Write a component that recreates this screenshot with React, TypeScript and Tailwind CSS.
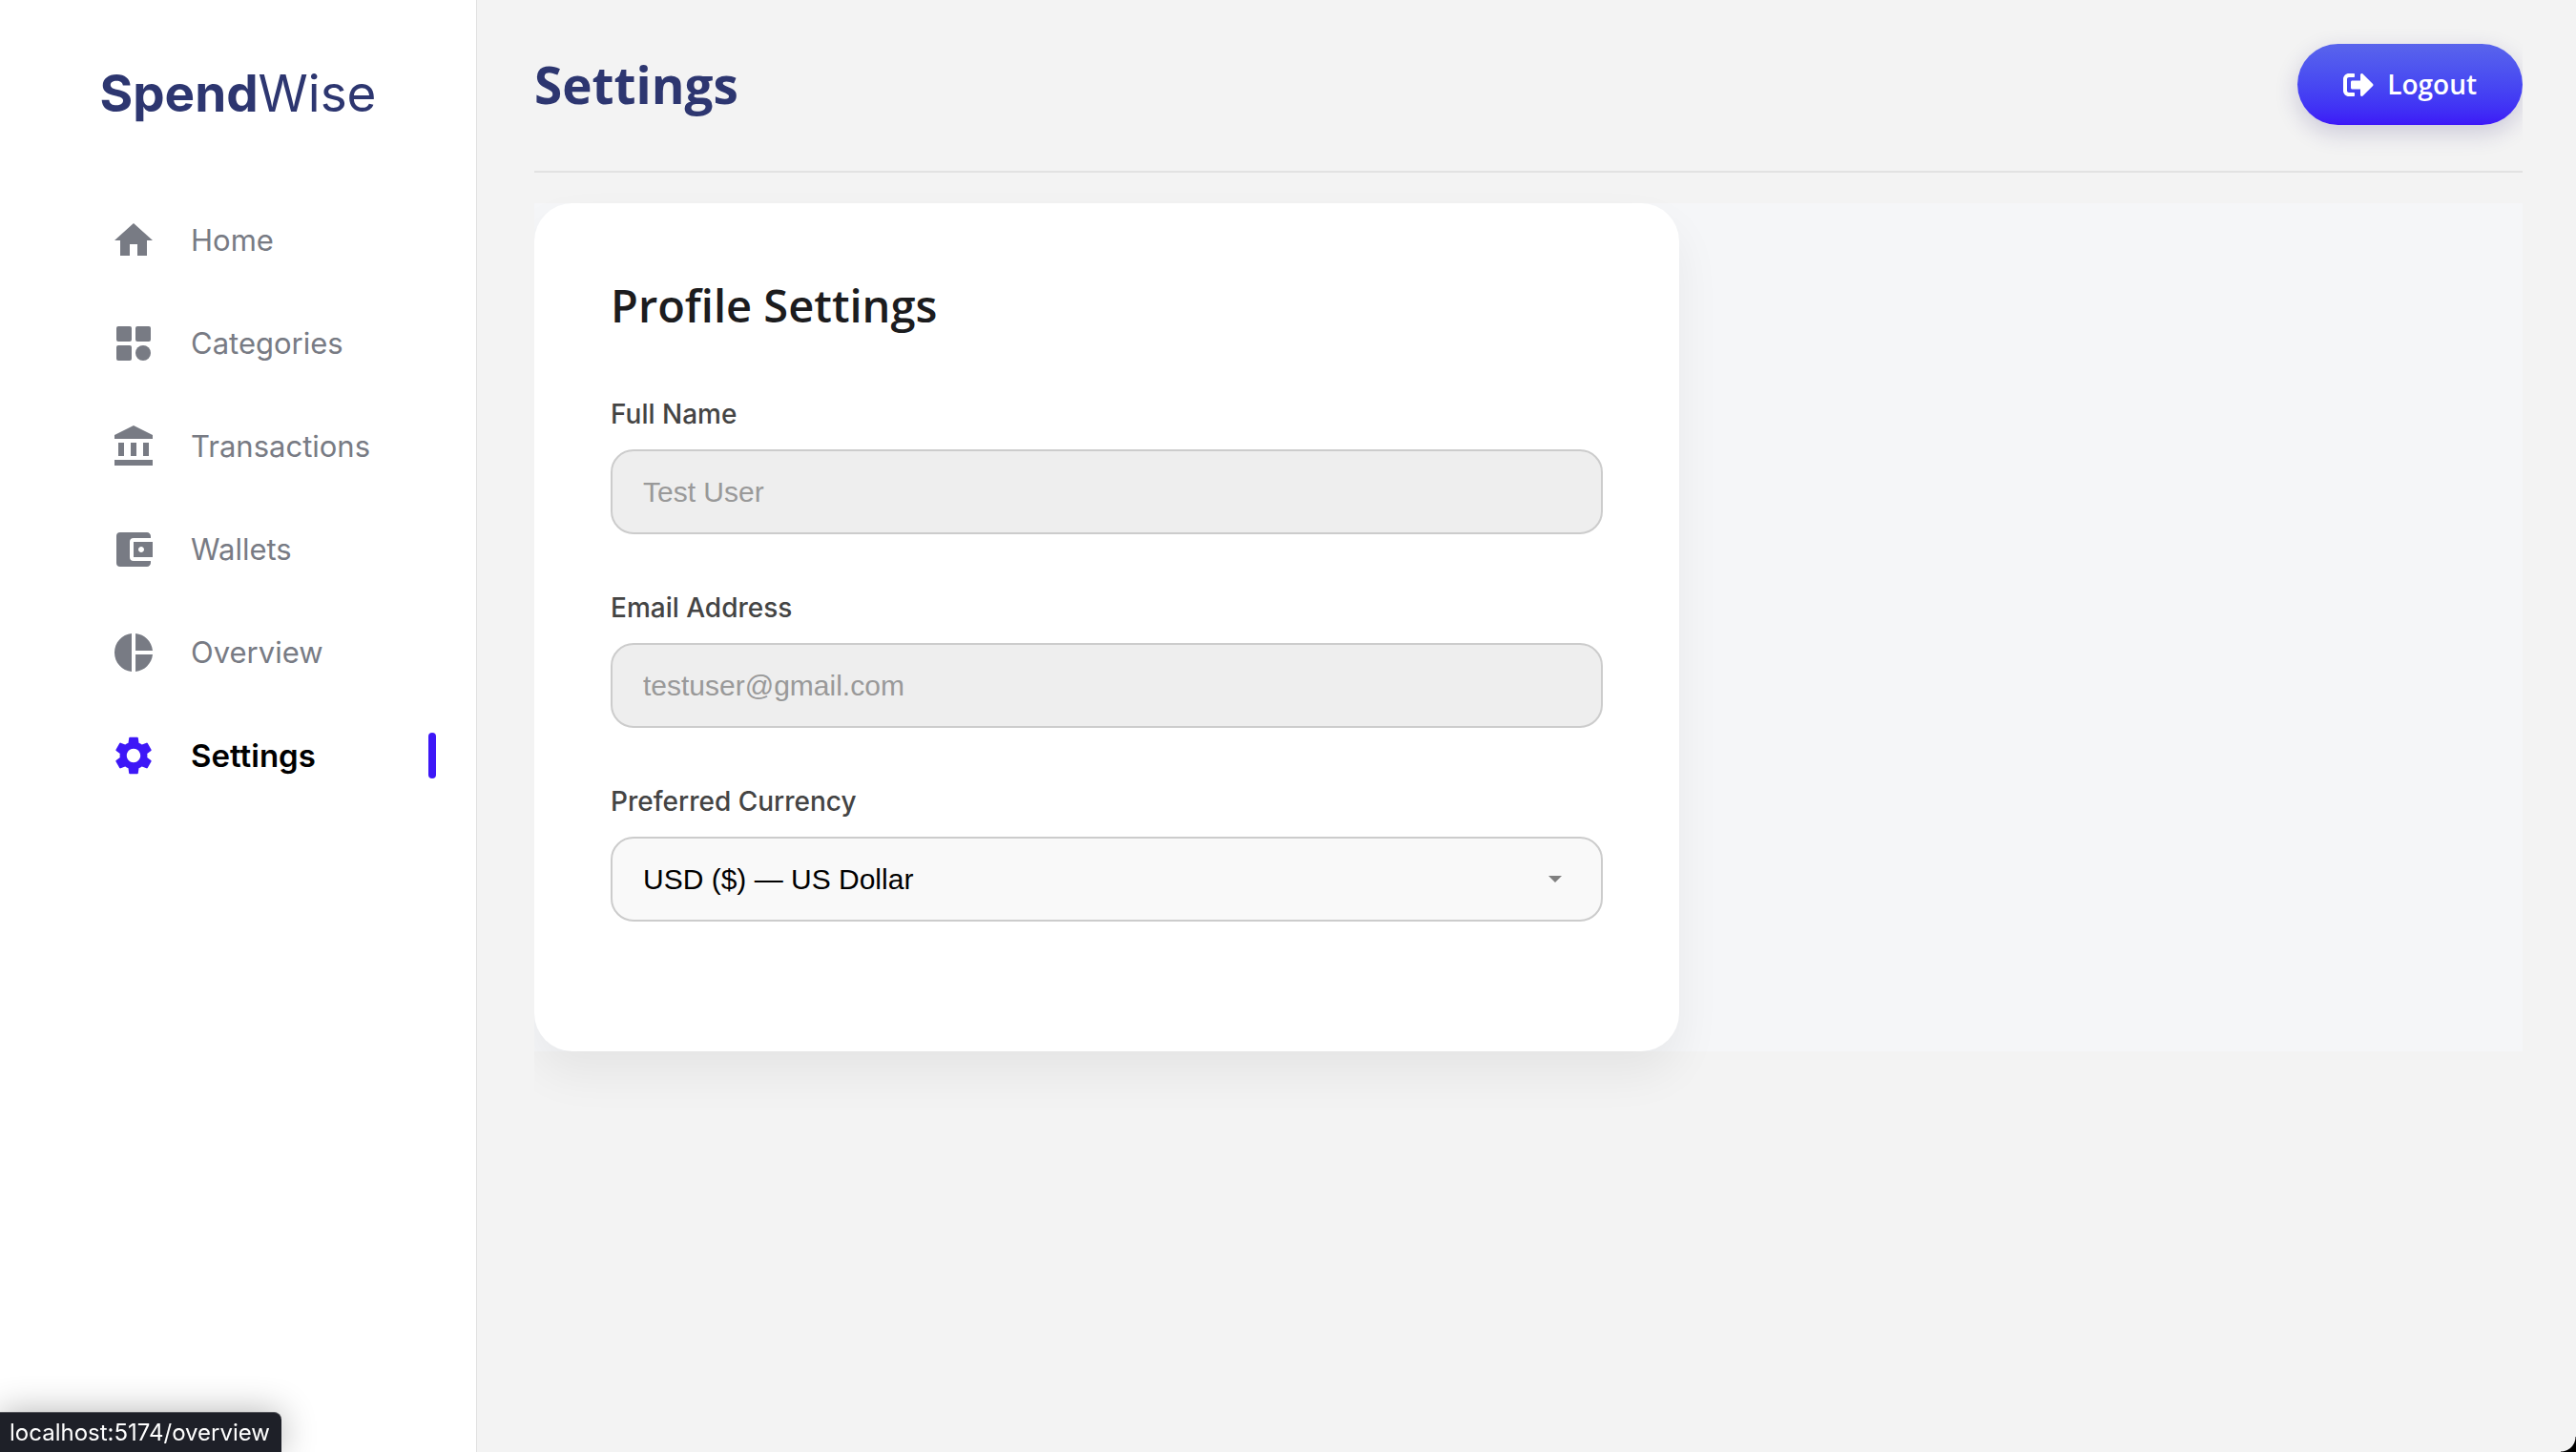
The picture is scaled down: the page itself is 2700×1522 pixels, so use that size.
import { useState } from "react";
import type { ReactNode } from "react";
import {
  MdAccountBalanceWallet,
  MdHome,
  MdPieChart,
  MdSettings,
} from "react-icons/md";
import { FaSignOutAlt } from "react-icons/fa";

function CategoriesIcon() {
  return (
    <svg viewBox="0 0 24 24" fill="currentColor" className="size-12" aria-hidden="true">
      <rect x="3" y="3" width="8" height="8" rx="1" />
      <rect x="13" y="3" width="8" height="8" rx="1" />
      <rect x="3" y="13" width="8" height="8" rx="1" />
      <circle cx="17" cy="17" r="4" />
    </svg>
  );
}

function BankIcon() {
  return (
    <svg viewBox="0 0 24 24" fill="currentColor" className="size-12" aria-hidden="true">
      <path d="M12 1 2 6v2h20V6L12 1zM4 10v7h3v-7H4zm6.5 0v7h3v-7h-3zM17 10v7h3v-7h-3zM2 19v3h20v-3H2z" />
    </svg>
  );
}

const navItems: { label: string; href: string; icon: ReactNode }[] = [
  { label: "Home", href: "/home", icon: <MdHome className="size-12" /> },
  { label: "Categories", href: "/categories", icon: <CategoriesIcon /> },
  { label: "Transactions", href: "/transactions", icon: <BankIcon /> },
  { label: "Wallets", href: "/wallets", icon: <MdAccountBalanceWallet className="size-12" /> },
  { label: "Overview", href: "/overview", icon: <MdPieChart className="size-12" /> },
  { label: "Settings", href: "/settings", icon: <MdSettings className="size-12" /> },
];

const currencies = [
  { code: "USD", label: "USD ($) — US Dollar" },
  { code: "EUR", label: "EUR (€) — Euro" },
  { code: "GBP", label: "GBP (£) — British Pound" },
];

function Sidebar({ active }: { active: string }) {
  return (
    <aside className="w-[500px] shrink-0 border-r border-[#e0e0e0] bg-white pt-[58px]">
      <div className="text-center text-[53px] leading-[80px] text-[#2d3670]">
        <span className="font-bold">Spend</span>
        <span className="font-normal">Wise</span>
      </div>
      <nav className="mt-[90px]">
        <ul className="flex flex-col gap-[60px]">
          {navItems.map(({ label, href, icon }) => {
            const isActive = label === active;
            return (
              <li key={label}>
                <a
                  href={href}
                  aria-current={isActive ? "page" : undefined}
                  className="flex h-12 items-center gap-9 pr-[42px] pl-[116px]"
                >
                  <span className={isActive ? "text-[#3d17f7]" : "text-[#787b84]"}>{icon}</span>
                  <span
                    className={
                      isActive
                        ? "text-[33px] leading-12 font-semibold text-black"
                        : "text-[31px] leading-12 text-[#787b84]"
                    }
                  >
                    {label}
                  </span>
                  {isActive && <span className="ml-auto h-12 w-2 rounded-full bg-[#3d17f7]" />}
                </a>
              </li>
            );
          })}
        </ul>
      </nav>
    </aside>
  );
}

function Field({ id, label, children }: { id: string; label: string; children: ReactNode }) {
  return (
    <div className="mb-14 flex flex-col gap-4">
      <label htmlFor={id} className="text-[28px] leading-[42px] font-medium text-[#444444]">
        {label}
      </label>
      {children}
    </div>
  );
}

function ReadOnlyInput({ id, type, value }: { id: string; type: string; value: string }) {
  return (
    <input
      id={id}
      type={type}
      value={value}
      disabled
      className="w-full rounded-3xl border-2 border-[#cccccc] bg-[#eeeeee] px-8 py-6 font-['Liberation_Sans',sans-serif] text-[30px] leading-[37px] text-[#999999]"
    />
  );
}

function ProfileCard() {
  const [currency, setCurrency] = useState("USD");
  return (
    <section className="w-full max-w-[1200px] rounded-[40px] bg-white p-20 shadow-[0_24px_48px_rgba(0,0,0,0.06)]">
      <h2 className="mb-[66px] font-['Open_Sans',sans-serif] text-[47px] leading-[54px] font-semibold text-[#1c1c1e]">
        Profile Settings
      </h2>
      <form>
        <Field id="full-name" label="Full Name">
          <ReadOnlyInput id="full-name" type="text" value="Test User" />
        </Field>
        <Field id="email" label="Email Address">
          <ReadOnlyInput id="email" type="email" value="testuser@gmail.com" />
        </Field>
        <Field id="currency" label="Preferred Currency">
          <div className="relative">
            <select
              id="currency"
              value={currency}
              onChange={(e) => setCurrency(e.target.value)}
              className="block w-full appearance-none rounded-3xl border-2 border-[#cccccc] bg-[#f9f9f9] px-8 py-6 font-['Liberation_Sans',sans-serif] text-[30px] leading-[37px] text-black"
            >
              {currencies.map(({ code, label }) => (
                <option key={code} value={code}>
                  {label}
                </option>
              ))}
            </select>
            <svg
              viewBox="0 0 14 7"
              className="pointer-events-none absolute inset-y-0 right-[43px] my-auto h-[7px] w-[14px] fill-[#808080]"
              aria-hidden="true"
            >
              <path d="M0 0h14L7 7z" />
            </svg>
          </div>
        </Field>
      </form>
    </section>
  );
}

export default function App() {
  return (
    <div className="flex min-h-screen bg-[#f3f3f3] font-['Inter',sans-serif]">
      <Sidebar active="Settings" />
      <main className="min-w-0 flex-1 pt-[46px] pr-14 pl-[60px]">
        <header className="flex items-center justify-between overflow-x-clip border-b-2 border-[#e2e2e2] pb-12">
          <h1 className="font-['Open_Sans',sans-serif] text-[53px] leading-[64px] font-bold text-[#2d3670]">
            Settings
          </h1>
          <button
            type="button"
            className="flex items-center gap-3.5 rounded-full bg-linear-to-b from-[#5964ec] to-[#3d17f7] px-12 py-6 font-['Open_Sans',sans-serif] text-[28px] leading-[37px] font-semibold text-white shadow-[0_8px_24px_rgba(40,30,110,0.2)]"
          >
            <FaSignOutAlt className="size-8" />
            Logout
          </button>
        </header>
        <div className="overflow-x-clip pt-8">
          <div className="bg-[#f5f6f8]">
            <ProfileCard />
          </div>
        </div>
      </main>
      <div className="fixed bottom-0 left-0 rounded-tr-lg border-t border-[#55565c] bg-[#1e2028] pr-3 pl-[10px] text-[24px] leading-[41px] text-white shadow-[0_0_36px_rgba(0,0,0,0.3)]">
        localhost:5174/overview
      </div>
      <div className="fixed right-0 bottom-0 size-4 bg-[radial-gradient(circle_at_0_0,transparent_15px,black_16px)]" />
    </div>
  );
}
